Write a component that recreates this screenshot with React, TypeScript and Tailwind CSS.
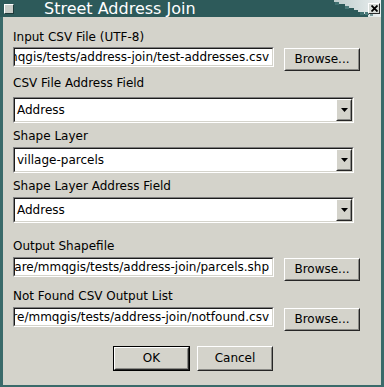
import React from "react";

const FONT = "font-['DejaVu_Sans',sans-serif]";

function Sunken({ className, children }: { className: string; children: React.ReactNode }) {
  return (
    <div className={`border border-t-[#808080] border-l-[#808080] border-b-white border-r-white ${className}`}>
      <div className="w-full h-full border border-t-[#1c1c1c] border-l-[#1c1c1c] border-b-[#d4d3cb] border-r-[#d4d3cb] bg-white flex">
        {children}
      </div>
    </div>
  );
}

function Raised({ className, children }: { className: string; children?: React.ReactNode }) {
  return (
    <div className={`border border-t-white border-l-white border-b-[#262626] border-r-[#262626] bg-[#d4d3cb] ${className}`}>
      <div className="w-full h-full border border-t-[#d4d3cb] border-l-[#d4d3cb] border-b-[#8a8a86] border-r-[#8a8a86] flex items-center justify-center">
        {children}
      </div>
    </div>
  );
}

function FileRow({ path, className }: { path: string; className: string }) {
  return (
    <div className={`flex items-start ${className}`}>
      <Sunken className="w-[261px] h-[20px]">
        <div className="flex-1 overflow-hidden flex items-center justify-end pr-[3px]">
          <span className="whitespace-nowrap shrink-0 text-[12px] leading-[15px] text-black">{path}</span>
        </div>
      </Sunken>
      <Raised className="ml-[10px] mt-[1px] w-[76px] h-[23px]">
        <span className="text-[12px] leading-[15px] text-black">Browse...</span>
      </Raised>
    </div>
  );
}

function Combo({ value, className }: { value: string; className: string }) {
  return (
    <Sunken className={`w-[341px] h-[26px] ${className}`}>
      <div className="flex-1 flex items-center pl-[2px] text-[12px] leading-[15px] text-black">{value}</div>
      <Raised className="w-[16px] h-full">
        <svg width="7" height="4" viewBox="0 0 7 4">
          <polygon points="0,0 7,0 3.5,4" fill="#000" />
        </svg>
      </Raised>
    </Sunken>
  );
}

function Label({ text, className }: { text: string; className: string }) {
  return <div className={`text-[12px] leading-[15px] text-black ${className}`}>{text}</div>;
}

export default function App() {
  return (
    <div className={`w-[384px] h-[387px] bg-[#3a6a6a] flex flex-col ${FONT}`}>
      {/* Title bar */}
      <div className="h-[17px] bg-[#2d5a5a] flex items-center shrink-0">
        <div className="ml-[4px] w-[10px] h-[10px] border border-t-white border-l-white border-b-[#1e3a3a] border-r-[#1e3a3a] bg-[#c8ccc8] shrink-0" />
        <div className="ml-[30px] text-[16px] leading-[17px] text-white whitespace-nowrap">Street Address Join</div>
        <div className="flex-1" />
        <div className="relative w-[54px] h-full flex items-center justify-end pr-[4px]">
          <svg className="absolute inset-0" width="54" height="17" viewBox="0 0 54 17">
            <defs>
              <linearGradient id="tg" x1="0" y1="0" x2="1" y2="0">
                <stop offset="0" stopColor="#b9c9c9" />
                <stop offset="1" stopColor="#eef2f2" />
              </linearGradient>
            </defs>
            <rect x="0" y="0" width="54" height="17" fill="url(#tg)" />
            <path d="M0 0 H4 V2 H8 V4 H14 V6 H18 V8 H22 V10 H28 V12 H33 V14 H38 V17 H0 Z" fill="#2d5a5a" />
            <rect x="5" y="2" width="4" height="3" fill="#3f7070" />
            <rect x="11" y="4" width="4" height="3" fill="#2d5a5a" />
            <rect x="15" y="6" width="4" height="3" fill="#4a7a7a" />
            <rect x="20" y="8" width="4" height="3" fill="#2d5a5a" />
            <rect x="24" y="10" width="4" height="3" fill="#2d5a5a" />
            <rect x="30" y="12" width="4" height="3" fill="#3f7070" />
            <rect x="35" y="12" width="4" height="3" fill="#4a7a7a" />
            <rect x="40" y="13" width="3" height="3" fill="#7a9a9a" />
            <rect x="51" y="0" width="3" height="17" fill="#3a6a6a" />
          </svg>
          <div className="relative w-[12px] h-[11px] bg-[#d8dcd8] border border-t-white border-l-white border-b-[#2a2a2a] border-r-[#2a2a2a] flex items-center justify-center">
            <svg width="7" height="7" viewBox="0 0 7 7">
              <path d="M0.5 0.5 L6.5 6.5 M6.5 0.5 L0.5 6.5" stroke="#000" strokeWidth="1.8" />
            </svg>
          </div>
        </div>
      </div>

      {/* Body */}
      <div className="flex-1 ml-[3px] mr-[3px] mb-[2px] bg-[#d4d3cb] flex flex-col pl-[10px]">
        <Label text="Input CSV File (UTF-8)" className="mt-[13px]" />
        <FileRow path="/home/michael/.local/share/mmqgis/tests/address-join/test-addresses.csv" className="mt-[2px]" />
        <Label text="CSV File Address Field" className="mt-[5px]" />
        <Combo value="Address" className="mt-[6px]" />
        <Label text="Shape Layer" className="mt-[6px]" />
        <Combo value="village-parcels" className="mt-[3px]" />
        <Label text="Shape Layer Address Field" className="mt-[6px]" />
        <Combo value="Address" className="mt-[3px]" />
        <Label text="Output Shapefile" className="mt-[16px]" />
        <FileRow path="/home/michael/.local/share/mmqgis/tests/address-join/parcels.shp" className="mt-[3px]" />
        <Label text="Not Found CSV Output List" className="mt-[8px]" />
        <FileRow path="/home/michael/.local/share/mmqgis/tests/address-join/notfound.csv" className="mt-[3px]" />
        <div className="mt-[15px] ml-[100px] flex gap-[7px]">
          <div className="border border-black w-[77px] h-[25px]">
            <Raised className="w-full h-full">
              <span className="text-[12px] leading-[15px] text-black">OK</span>
            </Raised>
          </div>
          <Raised className="w-[76px] h-[25px]">
            <span className="text-[12px] leading-[15px] text-black">Cancel</span>
          </Raised>
        </div>
      </div>
    </div>
  );
}
